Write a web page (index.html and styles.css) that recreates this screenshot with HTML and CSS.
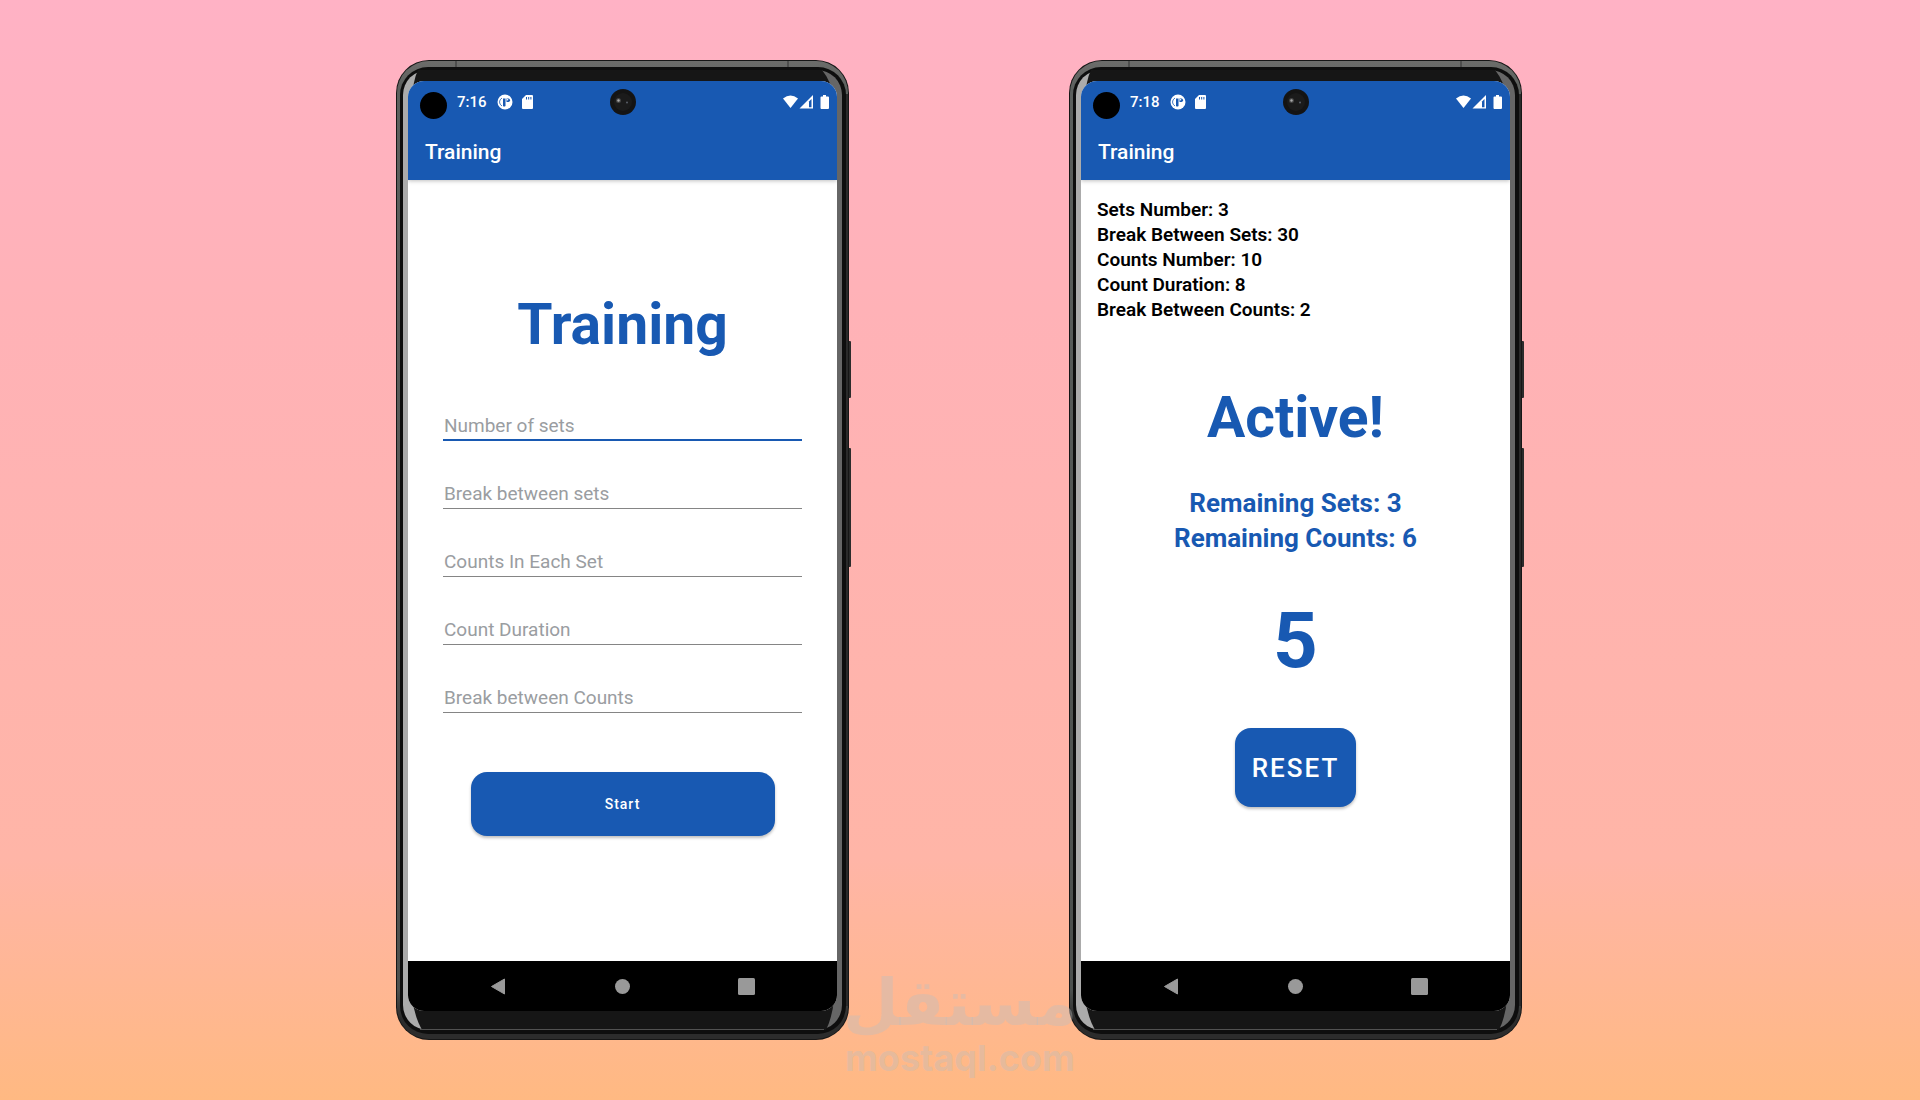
FILE: index.html
```
<!DOCTYPE html>
<html lang="en">
<head>
	<meta charset="utf-8">
	<title>Training</title>
	<link rel="stylesheet" href="styles.css">
</head>
<body>
	<!-- shared shapes -->
	<svg class="defs" aria-hidden="true">
		<defs>
			<linearGradient id="rim" x1="0" y1="0" x2="0" y2="1">
				<stop offset="0" stop-color="#6c6c6a"/>
				<stop offset=".03" stop-color="#5b5f5d"/>
				<stop offset=".95" stop-color="#4c504e"/>
				<stop offset=".98" stop-color="#2c2c2c"/>
				<stop offset="1" stop-color="#2c2c2c"/>
			</linearGradient>
			<linearGradient id="glass" x1="0" y1="0" x2="1" y2="0">
				<stop offset="0" stop-color="#ababab"/>
				<stop offset=".06" stop-color="#ababab"/>
				<stop offset=".94" stop-color="#666"/>
				<stop offset="1" stop-color="#666"/>
			</linearGradient>
		</defs>
		<symbol id="frame" viewBox="0 0 456 980" preserveAspectRatio="none">
			<path d="M452 281h2q1 0 1 1v55q0 1-1 1h-2zM452 388h2q1 0 1 1v117q0 1-1 1h-2z" fill="#2b2b2b"/>
			<rect width="453" height="980" rx="33" fill="#161616"/>
			<rect x="1" y="1" width="451" height="978" rx="32" fill="url(#rim)"/>
			<path d="M450.500 34V946" stroke="#2a2a2a" stroke-width="3"/>
			<rect x="4" y="7" width="446" height="967" rx="28" fill="#0e0e0e"/>
			<rect x="7" y="10" width="439" height="960" rx="25" fill="url(#glass)"/>
			<path d="M22 10H426Q436 22 438 40V940Q436 958 430 970H26Q18 956 16 936V40Q17 20 22 10z" fill="#161616"/>
			<path d="M24 969.500H428" stroke="#525252"/>
			<path d="M60 1v6M392 1v6" stroke="#333"/>
		</symbol>
		<symbol id="notif" viewBox="0 0 16 16">
			<circle cx="8" cy="8" r="7.500" fill="#fff"/>
			<path d="M5 4q-2.500 1.500-2.500 4T5 12" fill="none" stroke="#1859b2" stroke-width=".8"/>
			<path d="M6 4.500h2.500V12q-1.500 1-2.500 0z" fill="#1859b2"/>
			<path d="M9.500 4.500h2q1.500 0 1.500 1.700T11.500 8h-2z" fill="#1859b2"/>
			<circle cx="10.500" cy="5.800" r=".8" fill="#fff"/>
		</symbol>
		<symbol id="sd" viewBox="0 0 11 14">
			<path d="M4 0H10Q11 0 11 1V13Q11 14 10 14H1Q0 14 0 13V4z" fill="#fff"/>
			<path d="M4.500 2v2.500M6.700 2v2.500M8.900 2v2.500" stroke="#1859b2"/>
		</symbol>
		<symbol id="signals" viewBox="0 0 46 14">
			<path d="M0 3.500Q7.500-2.500 15 3.500L7.500 13z" fill="#fff"/>
			<path d="M30 0V13.500H16.500z" fill="#fff"/>
			<path d="M26 6.500L28.500 4V12.300H26z" fill="#1859b2"/>
			<path d="M40 0h3v1.500h2q1 0 1 1V13q0 1-1 1h-6.500q-1 0-1-1V2.500q0-1 1-1H40z" fill="#fff"/>
		</symbol>
		<symbol id="camera" viewBox="0 0 26 26">
			<circle cx="13" cy="13" r="13" fill="#141414"/>
			<circle cx="13" cy="13" r="9" fill="#1b1b1b"/>
			<circle cx="8.500" cy="11.500" r="2.500" fill="#444"/>
			<circle cx="8.500" cy="11.500" r="1.200" fill="#aaa"/>
			<circle cx="17" cy="13.500" r="1" fill="#5a5f68"/>
		</symbol>
		<symbol id="back" viewBox="0 0 17 17">
			<path d="M14.500 1V16L1.500 8.500z" fill="#999" stroke="#999" stroke-linejoin="round"/>
		</symbol>
		<symbol id="home" viewBox="0 0 17 17">
			<circle cx="8.500" cy="8.500" r="7.500" fill="#999"/>
		</symbol>
		<symbol id="recent" viewBox="0 0 17 17">
			<rect width="17" height="17" rx="1.500" fill="#999"/>
		</symbol>
	</svg>

	<main class="stage">
		<section class="phone">
			<svg class="frame"><use href="#frame"/></svg>
			<div class="screen">
				<div class="status">
					<span class="hole"></span>
					<span class="time">7:16</span>
					<svg class="notif"><use href="#notif"/></svg>
					<svg class="sd"><use href="#sd"/></svg>
					<svg class="signals"><use href="#signals"/></svg>
					<svg class="camera"><use href="#camera"/></svg>
				</div>
				<header class="appbar">Training</header>
				<form class="content setup">
					<h1>Training</h1>
					<div class="fields">
						<input class="active" type="text" placeholder="Number of sets" aria-label="Number of sets">
						<input type="text" placeholder="Break between sets" aria-label="Break between sets">
						<input type="text" placeholder="Counts In Each Set" aria-label="Counts In Each Set">
						<input type="text" placeholder="Count Duration" aria-label="Count Duration">
						<input type="text" placeholder="Break between Counts" aria-label="Break between Counts">
					</div>
					<button class="start" type="button">Start</button>
				</form>
				<nav class="navbar">
					<button type="button" aria-label="Back"><svg><use href="#back"/></svg></button>
					<button type="button" aria-label="Home"><svg><use href="#home"/></svg></button>
					<button type="button" aria-label="Recent apps"><svg><use href="#recent"/></svg></button>
				</nav>
			</div>
		</section>

		<section class="phone">
			<svg class="frame"><use href="#frame"/></svg>
			<div class="screen">
				<div class="status">
					<span class="hole"></span>
					<span class="time">7:18</span>
					<svg class="notif"><use href="#notif"/></svg>
					<svg class="sd"><use href="#sd"/></svg>
					<svg class="signals"><use href="#signals"/></svg>
					<svg class="camera"><use href="#camera"/></svg>
				</div>
				<header class="appbar">Training</header>
				<div class="content workout">
					<ul class="summary">
						<li>Sets Number: 3</li>
						<li>Break Between Sets: 30</li>
						<li>Counts Number: 10</li>
						<li>Count Duration: 8</li>
						<li>Break Between Counts: 2</li>
					</ul>
					<h1>Active!</h1>
					<div class="remaining">
						<p>Remaining Sets: 3</p>
						<p>Remaining Counts: 6</p>
					</div>
					<div class="counter">5</div>
					<button class="reset" type="button">RESET</button>
				</div>
				<nav class="navbar">
					<button type="button" aria-label="Back"><svg><use href="#back"/></svg></button>
					<button type="button" aria-label="Home"><svg><use href="#home"/></svg></button>
					<button type="button" aria-label="Recent apps"><svg><use href="#recent"/></svg></button>
				</nav>
			</div>
		</section>

		<div class="watermark">
			<span class="wm_arabic" lang="ar" dir="rtl">مستقل</span>
			<span class="wm_latin">mostaql.com</span>
		</div>
	</main>
</body>
</html>
```
FILE: styles.css
```
* { box-sizing: border-box; }
html, body, h1, p, ul { margin: 0; padding: 0; }
body {
	min-height: 100vh;
	background: linear-gradient(#ffb2c5, #ffb2b7 28%, #ffb5a7 78%, #ffb982);
	font-family: Roboto, "Liberation Sans", sans-serif;
	color: #000;
}
button, input { font-family: inherit; }
button { border: 0; cursor: pointer; }
svg { display: block; }
.defs { position: absolute; width: 0; height: 0; }

.stage {
	position: relative;
	display: flex;
	justify-content: center;
	gap: 219px;
	padding: 60px 1px 60px 0;
}

/* Phone */

.phone { position: relative; width: 454px; padding: 21px 13px 29px 12px; }
.frame { position: absolute; top: 0; left: 0; width: 456px; height: 100%; }
.screen {
	position: relative;
	display: flex;
	flex-direction: column;
	border-radius: 16px;
	overflow: hidden;
	background: #fff;
}

.status {
	position: relative;
	display: flex;
	align-items: center;
	height: 41px;
	padding: 0 8px 0 12px;
	background: #1859b2;
	color: #fff;
}
.hole { width: 27px; height: 27px; margin: 8px 10px 0 0; border-radius: 50%; background: #000; }
.time { width: 40px; font-size: 15px; line-height: 20px; font-weight: 500; }
.notif { width: 16px; height: 16px; margin-right: 9px; }
.sd { width: 11px; height: 14px; }
.signals { width: 46px; height: 14px; margin-left: auto; }
.camera { position: absolute; top: 8px; left: calc(50% - 13px); width: 26px; height: 26px; }

.appbar {
	height: 58px;
	padding: 0 17px;
	background: #1859b2;
	box-shadow: 0 1px 4px rgba(0, 0, 0, .25);
	color: #fff;
	font-size: 21px;
	line-height: 60px;
	font-weight: 500;
}

.content { display: flex; flex-direction: column; align-items: center; min-height: 781px; }
h1 { flex: none; color: #1859b2; font-size: 57px; line-height: 68px; font-weight: 700; }

.navbar {
	display: flex;
	justify-content: center;
	gap: 107px;
	height: 50px;
	background: #000;
}
.navbar button { padding: 0; background: none; }
.navbar svg { width: 17px; height: 17px; }

/* Setup screen */

.setup { padding: 111px 35px 0; }
.fields { display: flex; flex-direction: column; gap: 34px; width: 100%; margin-top: 48px; }
.fields input {
	width: 100%;
	height: 34px;
	padding: 4px 1px 0;
	border: 0;
	border-bottom: 1px solid #858585;
	background: none;
	font-size: 19px;
	outline: 0;
}
.fields input.active { border-bottom: 2px solid #1859b2; }
.fields input::placeholder { color: #9a9da1; opacity: 1; }
.start, .reset {
	border-radius: 16px;
	background: #1859b2;
	box-shadow: 0 2px 3px rgba(0, 0, 0, .25);
	color: #fff;
	font-weight: 500;
}
.start { width: 304px; height: 64px; margin-top: 59px; font-size: 14px; letter-spacing: 1px; }

/* Workout screen */

.workout { padding: 17px 16px 0; }
.summary { align-self: flex-start; list-style: none; font-size: 19px; line-height: 25px; font-weight: 600; }
.workout h1 { margin-top: 62px; }
.remaining {
	margin-top: 34px;
	color: #1859b2;
	font-size: 26px;
	line-height: 35px;
	font-weight: 700;
	text-align: center;
}
.counter { margin-top: 39px; color: #1859b2; font-size: 78px; line-height: 92px; font-weight: 700; }
.reset { height: 79px; margin-top: 41px; padding: 0 17px; font-size: 26px; letter-spacing: 2px; }

/* Watermark */

.watermark {
	position: absolute;
	left: 0;
	right: 0;
	bottom: 20px;
	display: flex;
	flex-direction: column;
	align-items: center;
	color: rgba(190, 190, 190, .4);
	font-weight: 700;
	pointer-events: none;
}
.wm_arabic { font-family: "DejaVu Sans", sans-serif; font-size: 64px; line-height: 66px; }
.wm_latin { font-family: Inter, sans-serif; font-size: 36px; line-height: 44px; }
```
